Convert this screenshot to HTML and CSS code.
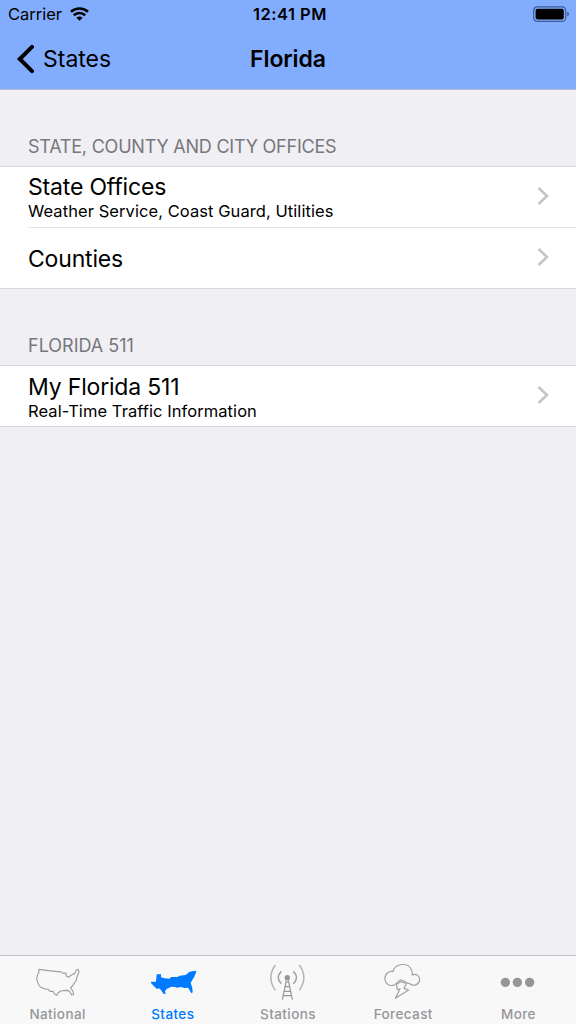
FILE: index.html
```html
<!DOCTYPE html>
<html lang="en">
<head>
    <meta charset="UTF-8">
    <meta name="viewport" content="width=device-width, initial-scale=1.0">
    <title>Florida</title>
    <link rel="stylesheet" href="styles.css">
</head>
<body>
    <div class="screen">
        <header class="header">
            <div class="status-bar">
                <div class="carrier">
                    <span class="carrier-name">Carrier</span>
                    <svg class="wifi" viewBox="0 0 60 42">
                        <path d="M3 14C18 0 42 0 57 14" fill="none" stroke="#000" stroke-width="8"/>
                        <path d="M12 25C22 15 38 15 48 25" fill="none" stroke="#000" stroke-width="8"/>
                        <path d="M20 33Q30 25 40 33L30 42Z"/>
                    </svg>
                </div>
                <div class="time">12:41 PM</div>
                <svg class="battery" viewBox="0 0 36 16">
                    <rect x="0.7" y="0.9" width="32" height="14.4" rx="3.6" fill="none" stroke="#3d5a94" stroke-width="1.2"/>
                    <rect x="2.6" y="2.8" width="28.2" height="10.6" rx="1.8"/>
                    <path d="M34.2 5.8Q36 6.4 36 8.1T34.2 10.5Z" fill="#3d5a94"/>
                </svg>
            </div>
            <div class="nav-bar">
                <a class="back">
                    <svg class="back-arrow" viewBox="0 0 18 30">
                        <path d="M16 2.8L3.8 15L16 27.2" fill="none" stroke="#000" stroke-width="4" stroke-linecap="round"/>
                    </svg>
                    <span class="back-label">States</span>
                </a>
                <h1 class="title">Florida</h1>
            </div>
        </header>

        <main class="content">
            <h2 class="section-title offices-title">STATE, COUNTY AND CITY OFFICES</h2>
            <div class="list">
                <a class="row">
                    <div class="row-text">
                        <div class="row-title">State Offices</div>
                        <div class="row-detail">Weather Service, Coast Guard, Utilities</div>
                    </div>
                    <svg class="chevron" viewBox="0 0 12 20"><path d="M1.5 2L10 10L1.5 18"/></svg>
                </a>
                <a class="row">
                    <div class="row-text">
                        <div class="row-title">Counties</div>
                    </div>
                    <svg class="chevron" viewBox="0 0 12 20"><path d="M1.5 2L10 10L1.5 18"/></svg>
                </a>
            </div>

            <h2 class="section-title">FLORIDA 511</h2>
            <div class="list">
                <a class="row traffic">
                    <div class="row-text">
                        <div class="row-title">My Florida 511</div>
                        <div class="row-detail">Real-Time Traffic Information</div>
                    </div>
                    <svg class="chevron" viewBox="0 0 12 20"><path d="M1.5 2L10 10L1.5 18"/></svg>
                </a>
            </div>
        </main>

        <nav class="tab-bar">
            <a class="tab">
                <svg class="tab-icon" viewBox="-7 24 240 132">
                    <path class="outline" d="M55 58L84 62L112 65L121 65L127 70L137 69L138 78L144 82L157 73L163 71L168 60L173 58L176 65L172 76L169 83L168 91L162 99L157 107L151 114L158 124L160 133L154 135L148 125L142 121L130 122L121 123L112 130L110 136L103 132L98 124L89 124L84 118L74 117L60 111L54 102L49 88L51 76L56 67Z"/>
                </svg>
                <span>National</span>
            </a>
            <a class="tab active">
                <svg class="tab-icon" viewBox="-7 24 240 132">
                    <path d="M64 73H77V82L88 85L103 86L107 81L126 81L133 77L151 75L163 65L181 62L183 65L176 82L166 98L171 115L172 127L168 130L163 121L158 113L147 114L137 111L126 113L119 111L108 110L94 117L89 124L91 132L84 131L77 120L71 115L65 117L56 109L47 99V95H62Z"/>
                </svg>
                <span>States</span>
            </a>
            <a class="tab">
                <svg class="tab-icon" viewBox="-6 24 240 132">
                    <circle cx="112" cy="83" r="8" fill="#969698"/>
                    <path class="outline wave" d="M94 64Q75 82 94 101M130 64Q149 82 130 101"/>
                    <path class="outline wave far" d="M76 45Q49 83 76 121M148 45Q175 83 148 121"/>
                    <path class="outline tower" d="M109 91L97 149M115 91L127 149M108 96H116M105 110H119M103 124H121M99 137H125"/>
                </svg>
                <span>Stations</span>
            </a>
            <a class="tab">
                <svg class="tab-icon" viewBox="-5 24 240 132">
                    <path class="outline" d="M90 104C82 109 62 107 61 87C60 71 73 62 85 65C91 39 131 36 140 59C143 65 144 70 142 75C157 69 165 79 165 90C164 102 148 111 137 102L126 98M90 104L108 89L124 96"/>
                    <path class="outline" d="M108 95L95 103L98 119L106 117L92 145L132 120L118 115L126 100Z"/>
                </svg>
                <span>Forecast</span>
            </a>
            <a class="tab">
                <svg class="tab-icon" viewBox="-5 24 240 132">
                    <g fill="#969698">
                        <circle cx="77" cy="97" r="14"/>
                        <circle cx="113" cy="97" r="14"/>
                        <circle cx="150" cy="97" r="14"/>
                    </g>
                </svg>
                <span>More</span>
            </a>
        </nav>
    </div>
</body>
</html>
```

FILE: styles.css
```css
* {
    box-sizing: border-box;
    margin: 0;
    padding: 0;
}

body {
    background: #efeff4;
    font-family: Inter, "Liberation Sans", sans-serif;
    color: #000;
}

.screen {
    display: flex;
    flex-direction: column;
    height: 100vh;
}

.header {
    height: 90px;
    background: #82adff;
    border-bottom: 1px solid #b4bdd5;
}

.status-bar {
    display: grid;
    grid-template-columns: 1fr auto 1fr;
    align-items: center;
    height: 28px;
    padding: 0 7px 0 8px;
    font-size: 16.5px;
}

.carrier {
    display: flex;
    align-items: center;
    gap: 8px;
}

.wifi {
    width: 19px;
    height: 14px;
}

.time {
    padding-left: 3px;
    font-weight: 600;
    font-size: 16.5px;
    letter-spacing: 0.5px;
}

.battery {
    justify-self: end;
    width: 36px;
    height: 16px;
}

.nav-bar {
    display: grid;
    grid-template-columns: 1fr auto 1fr;
    align-items: center;
    height: 61px;
    padding: 0 16px;
}

.back {
    display: flex;
    align-items: center;
    gap: 9px;
    font-size: 23px;
}

.back-arrow {
    width: 18px;
    height: 30px;
}

.title {
    font-size: 23px;
    font-weight: 600;
    letter-spacing: -0.1px;
}

.content {
    flex: 1;
}

.section-title {
    height: 76px;
    padding: 46px 28px 0;
    font-size: 18px;
    font-weight: 400;
    line-height: 22px;
    color: #77777c;
}

.offices-title {
    letter-spacing: -0.22px;
}

.list {
    background: #fff;
    border-top: 1px solid #d8d8dc;
    border-bottom: 1px solid #d8d8dc;
}

.row {
    display: flex;
    align-items: center;
    height: 60px;
    margin-left: 28px;
    padding-right: 27px;
}

.row + .row {
    height: 61px;
    border-top: 1px solid #e4e4e6;
}

.row-text {
    flex: 1;
}

.traffic .row-text {
    padding-top: 1px;
}

.row-title {
    padding-top: 1px;
    font-size: 23px;
    line-height: 27px;
    letter-spacing: -0.18px;
}

.row-title:only-child {
    padding-top: 2px;
}

.row-detail {
    font-size: 16.5px;
    line-height: 20px;
    letter-spacing: 0.07px;
}

.chevron {
    width: 12px;
    height: 20px;
    margin-bottom: 2px;
    fill: none;
    stroke: #c5c5c9;
    stroke-width: 2.6;
}

.tab-bar {
    display: flex;
    height: 69px;
    padding-top: 2px;
    background: #f8f8f8;
    border-top: 1px solid #c4c4c8;
}

.tab {
    display: flex;
    flex: 1;
    flex-direction: column;
    align-items: center;
    font-size: 13.5px;
    font-weight: 500;
    line-height: 24px;
    letter-spacing: 0.4px;
    color: #969698;
}

.tab.active {
    color: #007aff;
    fill: #007aff;
}

.tab-icon {
    width: 80px;
    height: 44px;
    flex-shrink: 0;
}

.outline {
    fill: none;
    stroke: #a0a0a2;
    stroke-width: 3.5;
    stroke-linejoin: round;
}

.wave {
    stroke-width: 4.5;
}

.far {
    stroke: #b4b4b6;
}

.tower {
    stroke: #969698;
}
```
